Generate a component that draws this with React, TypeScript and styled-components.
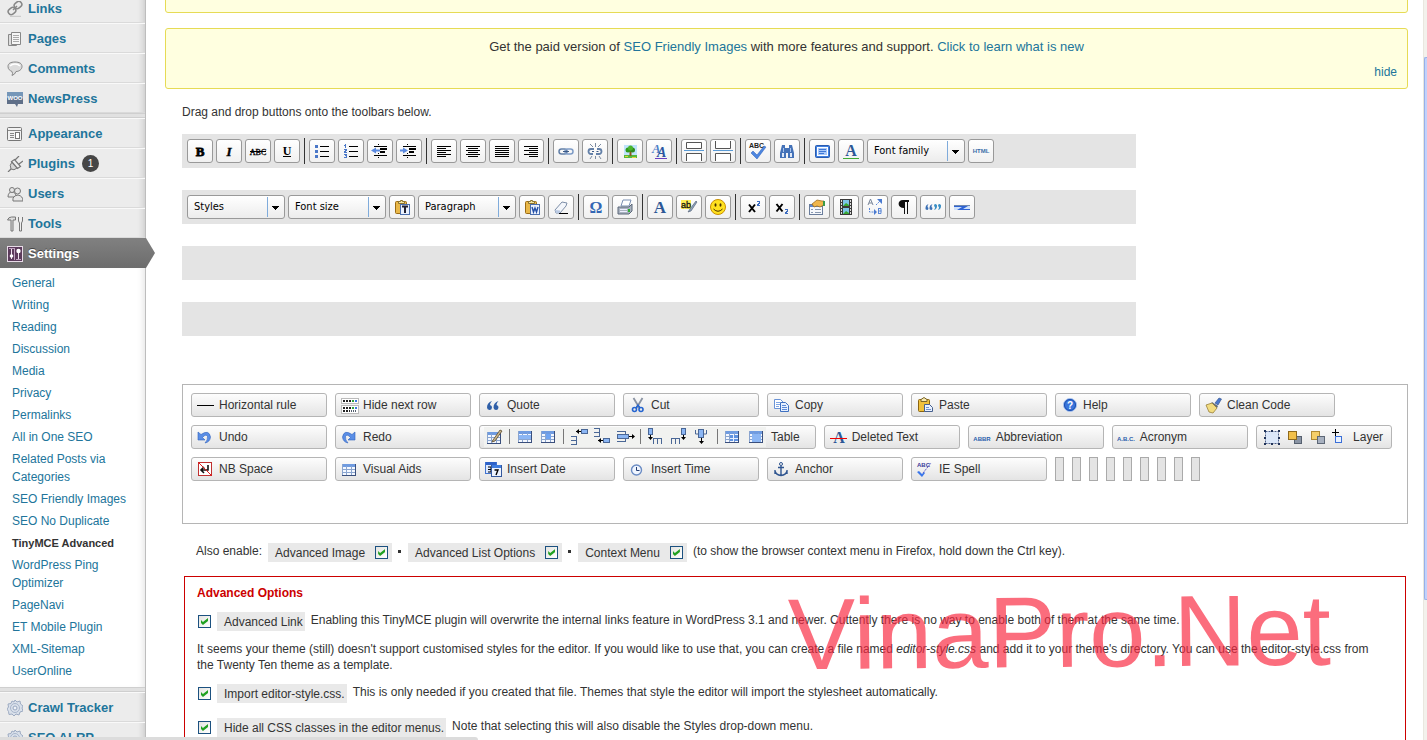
import React from 'react';
import styled, { createGlobalStyle } from 'styled-components';

const GlobalStyle = createGlobalStyle`
  *, *::before, *::after { box-sizing: border-box; }
  body { margin: 0; background: #fff; color: #333; font: 12px/16px "Liberation Sans", Arial, sans-serif; }
  a { color: #21759b; text-decoration: none; }
  p { margin: 0; }
  button, select, input { font-family: inherit; margin: 0; }
`;

const Page = styled.div`
  display: grid;
  grid-template-columns: 146px minmax(0, 1fr) 4px;
  height: 100vh;
  overflow: hidden;
`;

/* ---------- sidebar ---------- */
const Sidebar = styled.nav`
  margin-top: -7px;
  background: #ececec;
  border-right: 1px solid #bdbdbd;
  box-shadow: inset -6px 0 6px -4px rgba(0, 0, 0, 0.14);
  height: max-content;
`;
const MenuItem = styled.a<{ $active?: boolean }>`
  position: relative;
  display: flex;
  align-items: center;
  gap: 5px;
  height: 30px;
  padding: 1px 0 0 7px;
  font-size: 13px;
  font-weight: bold;
  color: ${(p) => (p.$active ? '#fff' : '#21759b')};
  border-top: 1px solid ${(p) => (p.$active ? '#808080' : '#f9f9f9')};
  border-bottom: 1px solid ${(p) => (p.$active ? '#6d6d6d' : '#dadada')};
  ${(p) =>
    p.$active &&
    `
    background: linear-gradient(#808080, #6d6d6d);
    margin-right: -1px;
    text-shadow: 0 -1px 0 #444;
    &::after {
      content: '';
      position: absolute;
      left: 100%;
      top: -1px;
      bottom: -1px;
      width: 9px;
      background: linear-gradient(#808080, #6d6d6d);
      clip-path: polygon(0 0, 100% 50%, 0 100%);
    }
  `}
`;
const Divider = styled.hr`
  height: 5px;
  margin: 0;
  border: 0;
  background: #e1e1e1;
  border-top: 1px solid #cfcfcf;
  border-bottom: 1px solid #cfcfcf;
`;
const Badge = styled.span`
  display: grid;
  place-items: center;
  width: 17px;
  height: 17px;
  margin-left: 2px;
  border-radius: 50%;
  background: #464646;
  color: #fff;
  font-size: 10px;
  font-weight: normal;
`;
const SubMenu = styled.ul`
  list-style: none;
  margin: 0;
  padding: 4px 12px 5px;
  background: #fff;
  box-shadow: inset -6px 0 6px -4px rgba(0, 0, 0, 0.1);
`;
const SubItem = styled.li<{ $current?: boolean }>`
  padding: 2px 0;
  line-height: 18px;
  a {
    color: ${(p) => (p.$current ? '#333' : '#21759b')};
    font-weight: ${(p) => (p.$current ? 'bold' : 'normal')};
    font-size: ${(p) => (p.$current ? '11px' : '12px')};
    white-space: pre-line;
  }
`;

/* ---------- content ---------- */
const Main = styled.main`
  min-width: 0;
  margin-top: -24px;
  padding: 0 15px 0 19px;
`;
const Notice = styled.section`
  min-height: 37px;
  border: 1px solid #e6db55;
  border-radius: 3px;
  background: #ffffe0;
  padding: 9px 10px 7px;
  margin-bottom: 15px;
  text-align: center;
  font-size: 13px;
  line-height: 18px;
`;
const Dismiss = styled.a`
  display: block;
  margin-top: 7px;
  font-size: 12px;
  text-align: right;
`;
const Editor = styled.div`
  padding-left: 17px;
`;
const Intro = styled.p`
  padding-bottom: 14px;
`;
const Toolbars = styled.div`
  display: grid;
  gap: 22px;
  max-width: 954px;
  margin-bottom: 48px;
`;
const Toolbar = styled.div`
  display: flex;
  align-items: center;
  gap: 3px;
  height: 34px;
  padding: 0 5px;
  background: #e4e4e4;
`;
const ToolButton = styled.button`
  display: grid;
  place-items: center;
  flex: none;
  width: 26px;
  height: 24px;
  padding: 0;
  border: 1px solid #999;
  border-radius: 3px;
  background: linear-gradient(#fff, #f0f0f0);
`;
const Separator = styled.span`
  flex: none;
  width: 3px;
  height: 26px;
  background: linear-gradient(#333, #333) center / 1px 100% no-repeat;
`;
const Drop = styled.label`
  position: relative;
  flex: none;
  display: block;
  width: 98px;
  height: 24px;
  svg {
    position: absolute;
    right: 1px;
    top: 1px;
    pointer-events: none;
  }
`;
const DropSelect = styled.select`
  appearance: none;
  width: 100%;
  height: 100%;
  padding: 0 18px 0 6px;
  border: 1px solid #999;
  border-radius: 3px;
  background: linear-gradient(#fff, #ececec);
  color: #000;
  font: 11px/16px "DejaVu Sans Condensed", Tahoma, sans-serif;
`;
const Palette = styled.div`
  display: flex;
  flex-wrap: wrap;
  align-content: flex-start;
  gap: 8px;
  min-height: 140px;
  padding: 8px;
  border: 1px solid #b5b5b5;
`;
const PaletteButton = styled.button<{ $wide?: boolean }>`
  display: flex;
  align-items: center;
  gap: ${(p) => (p.$wide ? '1px' : '3px')};
  width: ${(p) => (p.$wide ? 'auto' : '136px')};
  height: 24px;
  padding: 0 ${(p) => (p.$wide ? '15px' : '4px')} 0 4px;
  border: 1px solid #b5b5b5;
  border-radius: 3px;
  background: linear-gradient(#fdfdfd, #e4e4e4);
  color: #333;
  font-size: 12px;
  line-height: 16px;
  white-space: nowrap;
`;
const Spacer = styled.span`
  width: 9px;
  height: 24px;
  border: 1px solid #aaa;
  background: #e4e4e4;
`;
const EnableRow = styled.div`
  display: flex;
  align-items: center;
  gap: 6px;
  margin: 18px 0 13px 14px;
  height: 21px;
`;
const EnableText = styled.span`
  margin-bottom: 3px;
`;
const Chip = styled.label<{ $plain?: boolean }>`
  display: inline-flex;
  align-items: center;
  gap: 10px;
  height: 19px;
  padding: 0 ${(p) => (p.$plain ? '2px' : '4px')} 0 7px;
  background: #e9e9e9;
  white-space: nowrap;
`;
const Dot = styled.span`
  width: 3px;
  height: 3px;
  margin: 0 1px 3px 0;
  background: #333;
`;
const Check = styled.input`
  appearance: none;
  flex: none;
  width: 13px;
  height: 13px;
  border: 1px solid #1c5180;
  background: linear-gradient(135deg, #e4e4e0, #fff);
  display: grid;
  place-items: center;
  &:checked::before {
    content: '';
    width: 7px;
    height: 7px;
    background: #21a121;
    clip-path: polygon(0 28%, 28% 57%, 100% 0, 100% 43%, 28% 100%, 0 71%);
  }
`;
const Advanced = styled.section`
  position: relative;
  margin: 0 2px;
  padding: 8px 12px 20px;
  border: 1px solid #c00;
`;
const AdvancedTitle = styled.h3`
  margin: 0 0 11px;
  color: #c00;
  font-size: 12px;
  line-height: 16px;
`;
const Option = styled.div`
  display: flex;
  align-items: center;
  gap: 6px;
  height: 19px;
  padding-left: 1px;
  margin-bottom: 15px;
`;
const OptionText = styled.span`
  margin-bottom: 3px;
`;
const Note = styled.p`
  margin: -5px 0 11px;
  padding-right: 8px;
`;
const Watermark = styled.div`
  position: absolute;
  right: 74px;
  top: -2px;
  font-size: 101px;
  line-height: 115px;
  color: rgba(249, 40, 63, 0.68);
  transform: rotate(-0.5deg);
  pointer-events: none;
`;
const ScrollTrack = styled.div`
  display: flex;
  flex-direction: column;
  padding-top: 57px;
  height: 100vh;
  background: #f3f1ec;
  border-left: 1px solid #e9e7df;
`;
const ScrollThumb = styled.div`
  height: 543px;
  border: 1px solid #98b0e8;
  border-right: 0;
  border-radius: 2px 0 0 2px;
  background: #c1d2fc;
`;
const StatusBar = styled.div`
  position: fixed;
  left: 0;
  bottom: 0;
  width: 478px;
  height: 3px;
  border-top-right-radius: 3px;
  background: #dcdcdc;
`;

/* ---------- icons ---------- */
const Svg = ({ w = 20, h = 20, children }: { w?: number; h?: number; children: React.ReactNode }) => (
  <svg width={w} height={h} viewBox={`0 0 ${w} ${h}`} aria-hidden="true">
    {children}
  </svg>
);
const serif = '"Liberation Serif", serif';
const sans = '"Liberation Sans", sans-serif';
const P = ({ d, f = '#000' }: { d: string; f?: string }) => <path d={d} fill={f} shapeRendering="crispEdges" />;
const L = ({ d, s = '#000', w = 1 }: { d: string; s?: string; w?: number }) => (
  <path d={d} fill="none" stroke={s} strokeWidth={w} />
);

const lines = (spec: number[][]) => (
  <P d={spec.map(([x, y, w, h = 1]) => `M${x} ${y}h${w}v${h}h-${w}z`).join('')} />
);
const grid = (x: number, y: number) => (
  <g transform={`translate(${x} ${y})`}>
    <rect x="0" y="0" width="14" height="12" fill="#f4f8ff" />
    <rect x="0" y="0" width="14" height="3" fill="#6f9be0" />
    <L d="M.5 0v12M4.5 2v10M9.5 2v10M0 5.5h14M0 8.5h14" s="#8aa5cf" />
    <L d="M13.5 0v12M0 11.5h14" s="#3a4f7c" />
  </g>
);
const clipboard = (
  <>
    <rect x="3.500" y="4.500" width="11" height="12" rx="1" fill="#e9b84a" stroke="#9a6b14" />
    <path d="M6.500 6.500v-2h2v-1h2v1h2v2z" fill="#f5e6a0" stroke="#8a7230" />
  </>
);

const icons: Record<string, React.ReactNode> = {
  bold: <text x="10" y="15" fontFamily={serif} fontWeight="bold" fontSize="13" textAnchor="middle" stroke="#000" strokeWidth=".8">B</text>,
  italic: <text x="10" y="15" fontFamily={serif} fontWeight="bold" fontStyle="italic" fontSize="13" textAnchor="middle" stroke="#000" strokeWidth=".4">I</text>,
  strike: (
    <>
      <text x="10" y="14" fontFamily={serif} fontSize="8" textAnchor="middle" stroke="#000" strokeWidth=".3">ABC</text>
      <L d="M2 10.500h16" />
    </>
  ),
  underline: (
    <>
      <text x="10" y="14" fontFamily={serif} fontWeight="bold" fontSize="12" textAnchor="middle">U</text>
      <L d="M6 15.500h8" />
    </>
  ),
  bullist: (
    <>
      {lines([[8, 5, 9], [8, 10, 9], [8, 15, 9]])}
      <P d="M3 4h3v3h-3zM3 9h3v3h-3zM3 14h3v3h-3z" f="#4b78c8" />
    </>
  ),
  numlist: (
    <>
      {lines([[8, 5, 9], [8, 10, 9], [8, 15, 9]])}
      <P d="M4 3h1v4h-1zM3 4h1v1h-1zM3 8h3v2h-1v1h1v1h-3v-2h1v-1h-1zM3 13h3v4h-3v-1h2v-1h-1v-1h-1z" f="#4b78c8" />
    </>
  ),
  outdent: (
    <>
      {lines([[8, 3, 1], [4, 5, 13], [10, 7, 7, 2], [10, 10, 5, 2], [4, 14, 13], [8, 12, 1], [8, 16, 1]])}
      <path d="M1 9.500l5-3v2h4v2H6v2z" fill="#5b8ae0" />
    </>
  ),
  indent: (
    <>
      {lines([[8, 3, 1], [4, 5, 13], [10, 7, 7, 2], [10, 10, 5, 2], [4, 14, 13], [8, 12, 1], [8, 16, 1]])}
      <path d="M9 9.500l-5-3v2H1v2h3v2z" fill="#5b8ae0" />
    </>
  ),
  left: lines([[3, 5, 14], [3, 7, 9], [3, 9, 14], [3, 11, 9], [3, 13, 14], [3, 15, 9]]),
  center: lines([[3, 5, 14], [5, 7, 10], [3, 9, 14], [5, 11, 10], [3, 13, 14], [5, 15, 10]]),
  full: lines([[3, 5, 14], [3, 7, 14], [3, 9, 14], [3, 11, 14], [3, 13, 14], [3, 15, 14]]),
  right: lines([[3, 5, 14], [8, 7, 9], [3, 9, 14], [8, 11, 9], [3, 13, 14], [8, 15, 9]]),
  link: (
    <>
      <rect x="3" y="8" width="8" height="5" rx="2.500" fill="none" stroke="#6380a8" strokeWidth="1.500" />
      <rect x="9" y="8" width="8" height="5" rx="2.500" fill="none" stroke="#7f9cc6" strokeWidth="1.500" />
      <L d="M7 10.500h6" s="#3c5a86" />
    </>
  ),
  unlink: (
    <>
      <path d="M9 8H6a2.500 2.500 0 0 0 0 5h2M12 8h2a2.500 2.500 0 0 1 0 5h-3" fill="none" stroke="#6380a8" strokeWidth="1.800" />
      <path d="M7 10.500h2M11.500 10.500h2" stroke="#3c5a86" />
      <L d="M10.500 2v4M10.500 15v3M5 3l3 3M16 3l-3 3M5 18l2-3M16 18l-2-3" s="#7b8aa0" />
    </>
  ),
  image: (
    <>
      <rect x="4" y="4" width="13" height="13" fill="#bfe3fb" />
      <rect x="4" y="14" width="13" height="3" fill="#57b93c" />
      <path d="M9.500 10h2v5h-2z" fill="#8a5a1c" />
      <circle cx="8" cy="9" r="2.500" fill="#2f9a1e" />
      <circle cx="12.500" cy="9" r="2.500" fill="#2f8a1e" />
      <circle cx="10.500" cy="7" r="2.500" fill="#49b52e" />
      <L d="M5 15.500h3M12 16.500h4" s="#e6d23a" />
    </>
  ),
  style: (
    <>
      <text x="3" y="12" fontFamily={serif} fontWeight="bold" fontStyle="italic" fontSize="13" fill="#4f81c8">A</text>
      <text x="8" y="16" fontFamily={serif} fontWeight="bold" fontStyle="italic" fontSize="14" fill="#2a55a0">A</text>
      <L d="M6 17.500h12" s="#6a3fc0" />
    </>
  ),
  more: (
    <>
      <path d="M2.500 1.500h15v6h-15zM2.500 20v-7.500h15v7.500" fill="#fff" stroke="#555" />
      <L d="M0 9.500h20" s="#5b9bd5" />
    </>
  ),
  pagebreak: (
    <>
      <path d="M2.500 0v7.500h15V0M2.500 20v-7.500h15v7.500" fill="#fff" stroke="#555" />
      <L d="M0 9.500h20" s="#5b9bd5" />
    </>
  ),
  spell: (
    <>
      <text x="1" y="7" fontFamily={sans} fontWeight="bold" fontSize="7" fill="#222">ABC</text>
      <path d="M5 10l4 4 7-9 2 1-9 12-6-6z" fill="#4d86e0" stroke="#2b5fb8" strokeWidth=".5" />
    </>
  ),
  find: (
    <>
      <path d="M5 4h3v3h4V4h3l2 8v5h-6v-5H9v5H3v-5z" fill="#4472b8" />
      <path d="M5 12h2v4H5zM13 12h2v4h-2z" fill="#dfe9f8" />
      <path d="M6 7h1v4H6zM13 7h1v4h-1z" fill="#a8c4ee" />
    </>
  ),
  fullscreen: (
    <>
      <rect x="3.500" y="4.500" width="14" height="12" rx="1" fill="#3f7fe0" stroke="#2a5cb0" />
      <rect x="5.500" y="6.500" width="10" height="8" fill="#a9c9fa" stroke="#fff" />
      <L d="M7 8.500h7M7 10.500h7M7 12.500h5" s="#3f78d6" />
    </>
  ),
  styleprops: (
    <>
      <text x="10" y="15" fontFamily={serif} fontWeight="bold" fontSize="16" fill="#2d5796" textAnchor="middle">A</text>
      <L d="M2 17.500h16" s="#3faa34" />
    </>
  ),
  html: <text x="10" y="12" fontFamily={sans} fontWeight="bold" fontSize="6" fill="#3a6ea8" textAnchor="middle">HTML</text>,
  pastetext: (
    <>
      {clipboard}
      <rect x="8.500" y="7.500" width="9" height="10" fill="#eaf1fd" stroke="#4b6fae" />
      <L d="M10 9.500h6M13 9v7" s="#223" w={2} />
    </>
  ),
  pasteword: (
    <>
      {clipboard}
      <rect x="8.500" y="7.500" width="9" height="10" fill="#eaf1fd" stroke="#4b6fae" />
      <path d="M10 10l1.500 5 1.500-4 1.500 4L16 10" fill="none" stroke="#2450a8" strokeWidth="1.400" />
    </>
  ),
  eraser: (
    <>
      <path d="M4 13l7-8 5 1-1 3-6 7H5z" fill="#f3f6fb" stroke="#7d8ea8" />
      <path d="M4 13l5 .5V16H5z" fill="#b9c9e2" />
      <L d="M8 16.500h9" />
    </>
  ),
  omega: <text x="10" y="16" fontFamily={serif} fontWeight="bold" fontSize="16" fill="#3366b4" textAnchor="middle">Ω</text>,
  print: (
    <>
      <path d="M6 9l2-6h8l-2 6z" fill="#fff" stroke="#7b90b4" />
      <path d="M3 10h11l3-3v7l-3 3H3z" fill="#aab3c0" stroke="#5b6678" />
      <L d="M5 12.500h7M5 14.500h7" s="#eef" />
      <rect x="13" y="12" width="2" height="3" fill="#2fae32" />
    </>
  ),
  forecolor: <text x="10" y="16" fontFamily={serif} fontWeight="bold" fontSize="17" fill="#2d5796" textAnchor="middle">A</text>,
  backcolor: (
    <>
      <rect x="2" y="3" width="10" height="9" fill="#ffee55" />
      <text x="2" y="11" fontFamily={sans} fontSize="9" fill="#111" stroke="#111" strokeWidth=".3">ab</text>
      <path d="M17 4l-6 8-2 3 3-1 6-9z" fill="#8fa3bd" stroke="#46566b" strokeWidth=".6" />
    </>
  ),
  smile: (
    <>
      <circle cx="10" cy="10" r="7.500" fill="#ffe11f" stroke="#c98f00" />
      <ellipse cx="7.500" cy="8" rx="1" ry="1.800" fill="#4a3200" />
      <ellipse cx="12.500" cy="8" rx="1" ry="1.800" fill="#4a3200" />
      <path d="M5.500 12q4.500 4.500 9 0" fill="none" stroke="#4a3200" />
    </>
  ),
  sup: (
    <>
      <L d="M6 7.500l6 7.500M12 7.500L6 15" w={2} />
      <P d="M14 4h3v3h-1v1h1v1h-3v-2h1v-1h1v-1h-2z" f="#3c6cc0" />
    </>
  ),
  sub: (
    <>
      <L d="M4.500 7l6 7.500M10.500 7l-6 7.500" w={2} />
      <P d="M13 12h3v3h-1v1h1v1h-3v-2h1v-1h1v-1h-2z" f="#3c6cc0" />
    </>
  ),
  attribs: (
    <>
      <rect x="2.500" y="7.500" width="13" height="10" fill="#f6f8fc" stroke="#6a7d9c" />
      <rect x="3" y="8" width="12" height="2" fill="#5c86d0" />
      <L d="M4 12.500h2M8 12.500h6M4 15.500h2M8 15.500h6" s="#8898b0" />
      <path d="M5 7l5-4 5 1h2v4l-4 2-3-1-3 1z" fill="#f0b64c" stroke="#946214" strokeWidth=".7" />
      <rect x="16" y="4" width="2" height="5" fill="#3a9a4a" />
    </>
  ),
  media: (
    <>
      <rect x="4" y="2" width="12" height="16" fill="#3a3a3a" />
      <rect x="7" y="3" width="6" height="6" fill="#7cc4e8" />
      <rect x="7" y="11" width="6" height="6" fill="#7cc4e8" />
      <path d="M7 9l3-3 3 2v1zM7 17l3-3 3 2v1z" fill="#39a832" />
      <path d="M5.500 3v14M14.500 3v14" stroke="#ddd" strokeDasharray="2 1" />
    </>
  ),
  replace: (
    <>
      <path d="M3 8l2.500-6L8 8M4 6h3" fill="none" stroke="#7a8698" />
      <path d="M13.500 11v6M13.500 11.500h2.500v5h-2.500M13.500 14h3" fill="none" stroke="#5a86d6" />
      <path d="M4.500 11v4h4M11 8l4-4" fill="none" stroke="#5a86d6" strokeDasharray="2 1" />
      <path d="M12 2h5v5zM9 12l3 3-3 3z" fill="#4a7ad0" />
    </>
  ),
  pilcrow: <path d="M15 3v2h-1v12h-1V5h-2v12h-1v-6C3 11 3 3 9 3z" fill="#111" />,
  cite: (
    <>
      <path d="M5.500 7q-3 1-3 4a1.500 1.500 0 1 0 2-1q0-2 1-3zM9.500 7q-3 1-3 4a1.500 1.500 0 1 0 2-1q0-2 1-3z" fill="#3a6fb5" />
      <path d="M11 13q3-1 3-4a1.500 1.500 0 1 0-2 1q0 2-1 3zM15 13q3-1 3-4a1.500 1.500 0 1 0-2 1q0 2-1 3z" fill="#3a8fc5" />
    </>
  ),
  hr2: (
    <>
      <rect x="2" y="8" width="16" height="5" fill="#2d62d4" />
      <path d="M2 10h8l-5 3H2zM18 12h-7l5-3h2z" fill="#cfe1fa" />
      <path d="M2 8h16v1H2z" fill="#6f88b0" />
    </>
  ),
  rule: <L d="M1 10.500h17" />,
  hiderow: (
    <>
      <rect x="1.500" y="3.500" width="17" height="5" fill="#fff" stroke="#bbb" />
      <rect x="1.500" y="10.500" width="17" height="8" fill="#fff" stroke="#bbb" />
      <path d="M3 6h8M3 13h8M3 16h7" stroke="#222" strokeWidth="2" strokeDasharray="2 1" />
      <path d="M12 6h2M12 13h2" stroke="#2fa13c" strokeWidth="2" />
      <path d="M15 6h2M15 13h2" stroke="#3a76e0" strokeWidth="2" />
      <path d="M11 16h6" stroke="#55606f" strokeWidth="2" strokeDasharray="1 1" />
    </>
  ),
  quote: <path d="M8 6q-5 1.500-5 6.500a2.500 2.500 0 1 0 3-2.500q0-2 2-4zM14.500 6q-5 1.500-5 6.500a2.500 2.500 0 1 0 3-2.500q0-2 2-4z" fill="#2f5fa8" />,
  cut: (
    <>
      <path d="M5.500 3l6 10M14.500 3l-6 10" stroke="#8a93a3" strokeWidth="1.800" />
      <circle cx="6.500" cy="14.500" r="2" fill="none" stroke="#2464d0" strokeWidth="1.600" />
      <circle cx="13" cy="14.500" r="2" fill="none" stroke="#2464d0" strokeWidth="1.600" />
      <path d="M8 13l2-3 2 3" fill="none" stroke="#2464d0" strokeWidth="1.500" />
    </>
  ),
  copy: (
    <>
      <path d="M2.500 4.500h6l3 3v6h-9z" fill="#fff" stroke="#6a93d6" />
      <L d="M4 7.500h4M4 9.500h4M4 11.500h3" s="#7fa6e4" />
      <path d="M8.500 7.500h5l3 3v6h-8z" fill="#e6f0ff" stroke="#3f70c0" />
      <L d="M10 10.500h4M10 12.500h5M10 14.500h5" s="#5c8ad8" />
    </>
  ),
  paste: (
    <>
      <rect x="2.500" y="4.500" width="11" height="12" rx="1" fill="#f0c13c" stroke="#8a6410" />
      <path d="M5 6.500v-2l3-2 3 2v2z" fill="#f7e9b0" stroke="#7b6528" />
      <path d="M8.500 9.500h5l3 3v4h-8z" fill="#eaf1ff" stroke="#46608e" />
      <L d="M10 12.500h3M10 14.500h5" s="#6f93cf" />
    </>
  ),
  help: (
    <>
      <circle cx="10" cy="10" r="6.500" fill="#3a76dc" stroke="#a8c2ee" />
      <circle cx="10" cy="10" r="5.500" fill="none" stroke="#1d4fae" />
      <text x="10" y="14" fontFamily={sans} fontWeight="bold" fontSize="10" fill="#fff" textAnchor="middle">?</text>
    </>
  ),
  clean: (
    <>
      <path d="M11 8l4-5 2.500 1L14 10z" fill="#4a78cc" stroke="#2c4b86" strokeWidth=".6" />
      <path d="M8 7l6 4-1 2-6-4z" fill="#5f6b7c" />
      <path d="M2 10l6-2 5 5-4 5-4-1z" fill="#f2dc80" stroke="#98803a" strokeWidth=".8" />
    </>
  ),
  undo: <path d="M2 5v8h7L6.500 10.500Q10 6.500 11.500 9.500 12 13 9 16q5-1 5.500-6Q13 2 5 7.500z" fill="#5a8ee6" stroke="#2f62bd" strokeWidth=".6" />,
  redo: <path d="M15 5v8H8l2.500-2.500Q7 6.500 5.500 9.500 5 13 8 16q-5-1-5.500-6Q4 2 12 7.500z" fill="#5a8ee6" stroke="#2f62bd" strokeWidth=".6" />,
  deleted: (
    <>
      <text x="10" y="16" fontFamily={serif} fontWeight="bold" fontSize="16" fill="#2d5796" textAnchor="middle">A</text>
      <L d="M1 11.500h17" s="#f00000" />
    </>
  ),
  abbr: <text x="9" y="14" fontFamily={sans} fontWeight="bold" fontSize="6" fill="#2a60ac" textAnchor="middle">ABBR</text>,
  acronym: <text x="9" y="14" fontFamily={sans} fontWeight="bold" fontSize="6" fill="#2a60ac" textAnchor="middle">A.B.C.</text>,
  nbsp: (
    <>
      <rect x="2.500" y="3.500" width="13" height="13" fill="#fff" stroke="#c03030" />
      <path d="M12 6v5H5M8 8l-3 3 3 3" fill="none" stroke="#111" strokeWidth="1.600" />
      <L d="M2 3l14 14" s="#e01818" />
    </>
  ),
  visual: grid(2, 5),
  date: (
    <>
      <rect x="1.500" y="3.500" width="11" height="11" fill="#dce9ff" stroke="#4173cf" />
      <rect x="2" y="3" width="10" height="3" fill="#2e62c8" />
      <path d="M4 8h3v5h-3M4 10.500h3" fill="none" stroke="#000" />
      <rect x="7.500" y="6.500" width="10" height="11" fill="#eef4ff" stroke="#34589c" />
      <rect x="8" y="6" width="9" height="3" fill="#3f7de0" />
      <path d="M10.500 11h3.500l-2 5" fill="none" stroke="#000" strokeWidth="1.400" />
    </>
  ),
  time: (
    <>
      <circle cx="8.500" cy="11" r="5" fill="#f1f6ff" stroke="#6b8cc4" strokeWidth="1.400" />
      <L d="M8.500 8v3.500h3" s="#223c70" />
    </>
  ),
  anchor: (
    <>
      <circle cx="9" cy="5" r="1.500" fill="none" stroke="#2f5590" />
      <path d="M9 7v9M6 8.500h6M3 12q1 4 6 4.500 5-.5 6-4.500M3 11v4M15 11v4" fill="none" stroke="#2f5590" strokeWidth="1.400" />
    </>
  ),
  iespell: (
    <>
      <text x="1" y="8" fontFamily={sans} fontWeight="bold" fontSize="6" fill="#3a3a9a">ABC</text>
      <path d="M1 13l2-1 3 3 2-2 1 1-3 4z" fill="#3a76ea" />
      <path d="M7 14l8-10" stroke="#5a5ac8" strokeDasharray="2 1" />
    </>
  ),
};

const tableIcons = (
  <Svg w={286} h={20}>
    <rect width="282" height="20" fill="#f1f2f0" />
    {grid(3, 5)}
    <path d="M9 13l7-10 2 1-7 10-3 1z" fill="#c8b48a" stroke="#5d4b2c" strokeWidth=".8" />
    <L d="M25.500 2v15M79.500 2v15M156.500 2v15M233.500 2v15" s="#777" />
    {grid(34, 4)}
    <rect x="35" y="8" width="12" height="4" fill="#8bb6f4" />
    {grid(57, 4)}
    <rect x="62" y="7" width="5" height="5" fill="#6fa4f2" />
    <g stroke="#4a6796" fill="#fff">
      <path d="M87 9.500h6M87 13.500h6M87 17.500h6M92.500 9v9" />
      <rect x="97.500" y="2.500" width="6" height="4" fill="#8bb6f4" />
      <path d="M110 1.500h6M110 5.500h6M110 9.500h6M115.500 1v9" />
      <rect x="119.500" y="11.500" width="6" height="4" fill="#8bb6f4" />
      <path d="M133 4.500h9M133 14.500h9M141.500 4v11" />
      <rect x="133.500" y="7.500" width="11" height="4" fill="#8bb6f4" />
      <rect x="164.500" y="1.500" width="4" height="6" fill="#8bb6f4" />
      <path d="M169.500 17v-6M173.500 17v-6M177.500 17v-6M169 11.500h9" />
      <path d="M187.500 17v-6M191.500 17v-6M195.500 17v-6M187 11.500h9" />
      <rect x="197.500" y="1.500" width="4" height="6" fill="#8bb6f4" />
      <path d="M211.500 3v4h3M222.500 3v4h-3" fill="none" />
      <rect x="214.500" y="2.500" width="5" height="8" fill="#8bb6f4" />
    </g>
    <path d="M97 4.500h-5M119 13.500h-5M145 9.500h5M166.500 8v4M199.500 8v4M217.500 11v5" stroke="#000" />
    <path d="M95 2v5l-3-2.500zM117 11v5l-3-2.500zM148 7v5l3-2.500zM164 10h5l-2.500 3zM197 10h5l-2.500 3zM215 14h5l-2.500 3z" />
    {grid(241, 4)}
    <path d="M246 8h8v6h-8z" fill="#5f92e0" />
    <L d="M249.500 8v6M246 11.500h8" s="#e6efff" />
    {grid(265, 4)}
    <path d="M268 7h9v8h-9z" fill="#8bb6f4" />
  </Svg>
);

const layerIcons = (
  <Svg w={86} h={20}>
    <rect x="5" y="5" width="12" height="11" fill="#dce8fa" />
    <path d="M4.500 4.500h13v12h-13z" fill="none" stroke="#4a5f8c" strokeDasharray="2 1" />
    <P d="M3 3h2v2h-2zM10 3h2v2h-2zM17 3h2v2h-2zM3 10h2v2h-2zM17 10h2v2h-2zM3 16h2v2h-2zM10 16h2v2h-2zM17 16h2v2h-2z" f="#1f3258" />
    <rect x="33.500" y="9.500" width="7" height="7" fill="#8a94a4" stroke="#56606f" />
    <rect x="27.500" y="4.500" width="8" height="8" fill="#f2c04a" stroke="#8f6a1c" />
    <rect x="50.500" y="4.500" width="8" height="8" fill="#f5cf6a" stroke="#b08a34" />
    <rect x="56.500" y="9.500" width="7" height="7" fill="#a8b1c0" stroke="#5d6776" />
    <L d="M74.500 2v8M71 5.500h7" />
    <rect x="74.500" y="9.500" width="6" height="6" fill="#eaf2ff" stroke="#3a6fd8" />
  </Svg>
);

const menuIcons: Record<string, React.ReactNode> = {
  links: (
    <g fill="none" stroke="#888" strokeWidth="1.500">
      <rect x="7" y="1" width="8" height="6" rx="3" transform="rotate(-40 11 4)" />
      <rect x="1" y="7" width="8" height="6" rx="3" transform="rotate(-40 5 10)" />
      <path d="M6 9l4-4" />
      <path d="M3 15.500h11" stroke="#ccc" />
    </g>
  ),
  pages: (
    <>
      <path d="M1.500 3.500h8v11h-8z" fill="#ddd" stroke="#888" />
      <path d="M4.500 1.500h9v12h-9z" fill="#f6f6f6" stroke="#888" />
      <L d="M6 4.500h6M6 6.500h6M6 8.500h6M6 10.500h6" s="#aaa" />
    </>
  ),
  comments: (
    <>
      <path d="M8 1c4.500 0 7 1.500 7 4.500s-3 5-6 5q-1 3-4 4 1-2 0-4c-2-1-4-2-4-5s2.500-4.500 7-4.500z" fill="#dcdcdc" stroke="#888" />
      <path d="M3 5q2-2 5-2t5 2" fill="none" stroke="#fff" strokeWidth="1.500" />
    </>
  ),
  woo: (
    <>
      <path d="M0 1h16v12h-5l-1 3-2-3H0z" fill="#5f6f88" />
      <path d="M0 1h16v6H0z" fill="#7596b8" />
      <text x="8" y="9" fontFamily={sans} fontWeight="bold" fontSize="6" fill="#fff" textAnchor="middle">WOO</text>
    </>
  ),
  appearance: (
    <>
      <rect x=".5" y="1.500" width="14" height="13" rx="1" fill="#f2f2f2" stroke="#777" />
      <L d="M1 4.500h14M3 7.500h4M3 9.500h4M3 11.500h4" s="#888" />
      <rect x="8.500" y="6.500" width="4" height="6" fill="#fff" stroke="#777" />
    </>
  ),
  plugins: (
    <>
      <path d="M5 6l5 6q-3 3-6 1-2-4 1-7z" fill="#d5d5d5" stroke="#777" />
      <path d="M4.500 5.500l6 7 3-2-6-7zM8 4l4-4M12 8l4-3M4 13l-3 3" fill="#eee" stroke="#777" strokeWidth="1.200" />
    </>
  ),
  users: (
    <g fill="#e6e6e6" stroke="#777">
      <path d="M1 11q0-5 4-5t4 5z" />
      <circle cx="5" cy="4" r="2.500" />
      <path d="M6 15q-1-5 5-6 5 1 5 6z" />
      <circle cx="10.500" cy="5" r="3" />
    </g>
  ),
  tools: (
    <g fill="#ddd" stroke="#777">
      <path d="M.5 4q1-3 4-3h4v3H6v11H4V4z" />
      <path d="M11.500 1v4l1 2v8h2V7l1-2V1" fill="#eee" />
    </g>
  ),
  settings: (
    <>
      <rect x=".500" y=".500" width="15" height="15" fill="#5c3b5c" stroke="#e8dbe8" />
      <path d="M4.500 3v10M11.500 3v10" stroke="#efe4ef" />
      <path d="M2 2.500h5M9 13.500h5M7.500 2v12" stroke="#bfa2bf" />
      <circle cx="4.500" cy="10" r="1.800" fill="#fff" />
      <circle cx="11.500" cy="5" r="2.200" fill="#fff" />
    </>
  ),
  gear: (
    <>
      <path
        d="M8 0l2 2 3-1 .5 3L16 6l-1 2 1 3-3 1-1 3-3-1-2 2-2-2-3 .500-.500-3L0 9l1.500-2L1 4l3-.500L5 1l2 1z"
        fill="#d9e0ea"
        stroke="#9dabc2"
      />
      <circle cx="8" cy="8" r="4.500" fill="none" stroke="#a8b6cc" />
      <circle cx="8" cy="8" r="2" fill="#eef2f8" stroke="#97a6bf" />
    </>
  ),
};

const MenuLink = ({ icon, label, active, badge }: { icon: string; label: string; active?: boolean; badge?: string }) => (
  <MenuItem href="#" $active={active}>
    <Svg w={16} h={16}>{menuIcons[icon]}</Svg>
    {label}
    {badge && <Badge>{badge}</Badge>}
  </MenuItem>
);

const submenu = [
  'General', 'Writing', 'Reading', 'Discussion', 'Media', 'Privacy', 'Permalinks', 'All in One SEO',
  'Related Posts via\nCategories', 'SEO Friendly Images', 'SEO No Duplicate', 'TinyMCE Advanced',
  'WordPress Ping\nOptimizer', 'PageNavi', 'ET Mobile Plugin', 'XML-Sitemap', 'UserOnline',
];

/* '|' is a separator; a leading '=' marks a drop-down */
const rows = [
  ['bold', 'italic', 'strike', 'underline', '|', 'bullist', 'numlist', 'outdent', 'indent', '|', 'left', 'center',
    'full', 'right', '|', 'link', 'unlink', '|', 'image', 'style', '|', 'more', 'pagebreak', '|', 'spell', 'find', '|',
    'fullscreen', 'styleprops', '=Font family', 'html'],
  ['=Styles', '=Font size', 'pastetext', '=Paragraph', 'pasteword', 'eraser', '|', 'omega', 'print', '|', 'forecolor',
    'backcolor', 'smile', '|', 'sup', 'sub', '|', 'attribs', 'media', 'replace', 'pilcrow', 'cite', 'hr2'],
  [],
  [],
];

const palette: [string, string][] = [
  ['rule', 'Horizontal rule'], ['hiderow', 'Hide next row'], ['quote', 'Quote'], ['cut', 'Cut'], ['copy', 'Copy'],
  ['paste', 'Paste'], ['help', 'Help'], ['clean', 'Clean Code'], ['undo', 'Undo'], ['redo', 'Redo'],
  ['table', 'Table'], ['deleted', 'Deleted Text'], ['abbr', 'Abbreviation'], ['acronym', 'Acronym'],
  ['layer', 'Layer'], ['nbsp', 'NB Space'], ['visual', 'Visual Aids'], ['date', 'Insert Date'],
  ['time', 'Insert Time'], ['anchor', 'Anchor'], ['iespell', 'IE Spell'],
];

const Tool = ({ name }: { name: string }) => {
  if (name === '|') return <Separator />;
  if (name[0] === '=') {
    const label = name.slice(1);
    return (
      <Drop>
        <DropSelect aria-label={label}>
          <option>{label}</option>
        </DropSelect>
        <Svg w={17} h={22}>
          <L d="M.5 1v20" s="#7fabdb" />
          <P d="M5 10h7v1h-1v1h-1v1h-1v1h-1v-1h-1v-1h-1v-1h-1z" />
        </Svg>
      </Drop>
    );
  }
  return (
    <ToolButton type="button" aria-label={name}>
      <Svg>{icons[name]}</Svg>
    </ToolButton>
  );
};

const PaletteItem = ({ icon, label }: { icon: string; label: string }) => {
  if (icon === 'table') return <PaletteButton type="button" $wide>{tableIcons}{label}</PaletteButton>;
  if (icon === 'layer') return <PaletteButton type="button">{layerIcons}<span>&nbsp;{label}</span></PaletteButton>;
  return (
    <PaletteButton type="button">
      <Svg>{icons[icon]}</Svg>
      {label}
    </PaletteButton>
  );
};

const EnableChip = ({ id, label }: { id: string; label: string }) => (
  <Chip htmlFor={id}>
    {label}
    <Check type="checkbox" id={id} defaultChecked />
  </Chip>
);

const AdvancedOption = ({ id, label, children }: { id: string; label: string; children: React.ReactNode }) => (
  <Option>
    <Check type="checkbox" id={id} defaultChecked />
    <Chip htmlFor={id} $plain>{label}</Chip>
    <OptionText>{children}</OptionText>
  </Option>
);

export default function App() {
  return (
    <>
      <GlobalStyle />
      <Page>
        <Sidebar>
          <MenuLink icon="links" label="Links" />
          <MenuLink icon="pages" label="Pages" />
          <MenuLink icon="comments" label="Comments" />
          <MenuLink icon="woo" label="NewsPress" />
          <Divider />
          <MenuLink icon="appearance" label="Appearance" />
          <MenuLink icon="plugins" label="Plugins" badge="1" />
          <MenuLink icon="users" label="Users" />
          <MenuLink icon="tools" label="Tools" />
          <MenuLink icon="settings" label="Settings" active />
          <SubMenu>
            {submenu.map((s) => (
              <SubItem key={s} $current={s === 'TinyMCE Advanced'}>
                <a href="#">{s}</a>
              </SubItem>
            ))}
          </SubMenu>
          <Divider />
          <MenuLink icon="gear" label="Crawl Tracker" />
          <MenuLink icon="gear" label="SEO ALRP" />
        </Sidebar>
        <Main>
          <Notice />
          <Notice>
            Get the paid version of <a href="#">SEO Friendly Images</a> with more features and support.{' '}
            <a href="#">Click to learn what is new</a>
            <Dismiss href="#">hide</Dismiss>
          </Notice>
          <Editor>
            <Intro>Drag and drop buttons onto the toolbars below.</Intro>
            <Toolbars>
              {rows.map((row, i) => (
                <Toolbar key={i}>
                  {row.map((name, j) => (
                    <Tool key={j} name={name} />
                  ))}
                </Toolbar>
              ))}
            </Toolbars>
            <Palette>
              {palette.map(([icon, label]) => (
                <PaletteItem key={icon} icon={icon} label={label} />
              ))}
              {Array.from({ length: 9 }, (_, i) => (
                <Spacer key={i} />
              ))}
            </Palette>
            <EnableRow>
              <EnableText>Also enable:</EnableText>
              <EnableChip id="image" label="Advanced Image" />
              <Dot />
              <EnableChip id="list" label="Advanced List Options" />
              <Dot />
              <EnableChip id="context" label="Context Menu" />
              <EnableText>(to show the browser context menu in Firefox, hold down the Ctrl key).</EnableText>
            </EnableRow>
            <Advanced>
              <AdvancedTitle>Advanced Options</AdvancedTitle>
              <AdvancedOption id="link" label="Advanced Link">
                Enabling this TinyMCE plugin will overwrite the internal links feature in WordPress 3.1 and newer.
                Cuttently there is no way to enable both of them at the same time.
              </AdvancedOption>
              <Note>
                It seems your theme (still) doesn't support customised styles for the editor. If you would like to use
                that, you can create a file named <em>editor-style.css</em> and add it to your theme's directory. You
                can use the editor-style.css from the Twenty Ten theme as a template.
              </Note>
              <AdvancedOption id="import" label="Import editor-style.css.">
                This is only needed if you created that file. Themes that style the editor will import the stylesheet
                automatically.
              </AdvancedOption>
              <AdvancedOption id="hide" label="Hide all CSS classes in the editor menus.">
                Note that selecting this will also disable the Styles drop-down menu.
              </AdvancedOption>
              <Watermark>VinaPro.Net</Watermark>
            </Advanced>
          </Editor>
        </Main>
        <ScrollTrack>
          <ScrollThumb />
        </ScrollTrack>
      </Page>
      <StatusBar />
    </>
  );
}
